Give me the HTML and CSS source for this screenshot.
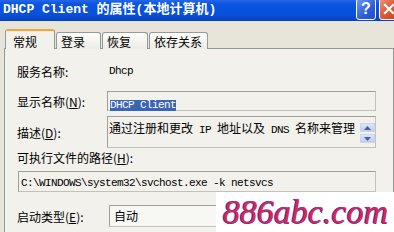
FILE: index.html
```
<!DOCTYPE html>
<html lang="zh-CN">
<head>
<meta charset="utf-8">
<title>DHCP Client 的属性</title>
<link rel="stylesheet" href="styles.css">
</head>
<body>
<div class="titlebar">
  <span class="title">DHCP Client 的属性(本地计算机)</span>
  <div class="tb-buttons">
    <span class="btn help">?</span>
    <span class="btn close"><svg width="12" height="12" viewBox="0 0 12 12"><path d="M2 2L10 10M10 2L2 10" stroke="#fff" stroke-width="2.2" stroke-linecap="square"/></svg></span>
  </div>
</div>
<div class="tabs">
  <div class="tab active t1">常规</div>
  <div class="tab t2">登录</div>
  <div class="tab t3">恢复</div>
  <div class="tab t4">依存关系</div>
</div>
<div class="panel">
  <div class="row r1"><span class="label">服务名称:</span><span class="mono name">Dhcp</span></div>
  <div class="row r2"><span class="label">显示名称(<u>N</u>):</span><div class="box display"><span class="mono sel">DHCP Client</span></div></div>
  <div class="row r3"><span class="label">描述(<u>D</u>):</span>
    <div class="box desc">
      <span class="desc-text">通过注册和更改<span class="lat"> IP </span>地址以及<span class="lat"> DNS </span>名称来管理</span>
      <div class="scroll">
        <span class="sbtn"><svg width="7" height="4" viewBox="0 0 7 4"><path d="M0 4L3.5 0L7 4Z" fill="#4d6185"/></svg></span>
        <span class="sbtn"><svg width="7" height="4" viewBox="0 0 7 4"><path d="M0 0L3.5 4L7 0Z" fill="#4d6185"/></svg></span>
      </div>
    </div>
  </div>
  <div class="row r4"><span class="label wide">可执行文件的路径(<u>H</u>):</span></div>
  <div class="box path"><span class="mono">C:\WINDOWS\system32\svchost.exe -k netsvcs</span></div>
  <div class="row r6"><span class="label">启动类型(<u>E</u>):</span><div class="box combo">自动</div></div>
</div>
<div class="watermark">886abc.com</div>
</body>
</html>
```
FILE: styles.css
```
* { box-sizing: border-box; }
body {
  margin: 0;
  width: 394px;
  height: 232px;
  overflow: hidden;
  position: relative;
  background: #e7e5da;
  font-family: "Noto Sans CJK SC", sans-serif;
  font-size: 12px;
  color: #000;
}
.titlebar {
  height: 21px;
  display: flex;
  justify-content: space-between;
  align-items: flex-start;
  background: linear-gradient(#2767e8, #0a55e2 18%, #0850da 70%, #0a41b8);
}
.title {
  color: #fff;
  font: bold 13px/20px "Liberation Mono", "Noto Sans CJK SC", monospace;
  padding-left: 3px;
  white-space: nowrap;
}
.tb-buttons {
  display: flex;
  gap: 3px;
  margin-top: -2px;
  margin-right: -5px;
}
.btn {
  width: 20px;
  height: 22px;
  border: 1px solid #fff;
  border-radius: 3px;
  display: flex;
  align-items: center;
  justify-content: center;
  color: #fff;
  font: bold 16px "Liberation Sans", sans-serif;
}
.help { background: linear-gradient(135deg, #6b9af6, #2d5ed8 60%, #1f4fc8); }
.close { background: linear-gradient(135deg, #f0917a, #e05a33 50%, #c8401e); }
.tabs {
  display: flex;
  align-items: flex-end;
  gap: 1px;
  height: 20px;
  margin: 8px 0 -1px 5px;
  position: relative;
  z-index: 1;
}
.tab {
  height: 17px;
  border: 1px solid #919b9c;
  border-bottom: none;
  border-radius: 3px 3px 0 0;
  background: linear-gradient(#fdfdfb, #ecebe5);
  padding: 1px 0 0 4px;
  line-height: 15px;
}
.t1 { width: 50px; }
.t2 { width: 45px; }
.t3 { width: 46px; }
.t4 { width: 59px; }
.tab.active {
  height: 20px;
  border-top: 2px solid #f0a73a;
  background: #f2f1eb;
  padding: 3px 0 0 7px;
}
.panel {
  margin-left: 4px;
  width: 390px;
  height: 184px;
  overflow: hidden;
  border: 1px solid #919b9c;
  border-bottom: none;
  background: #f2f1eb;
  padding: 15px 0 0 12px;
  display: flex;
  flex-direction: column;
}
.row { display: flex; align-items: center; flex: none; }
.label { width: 90px; flex: none; white-space: nowrap; }
.mono {
  font: 11px "Liberation Mono", monospace;
  letter-spacing: -0.6px;
  white-space: pre;
}
.r1 { height: 14px; }
.name { margin-left: 2px; }
.box {
  flex: none;
  border: 1px solid #c2c2ba;
  border-top-color: #9f9f97;
  border-left-color: #9f9f97;
}
.r2 { margin-top: 13px; }
.display {
  width: 269px;
  height: 20px;
  padding: 2px 0 0 2px;
}
.sel {
  display: inline-block;
  background: #3a64b4;
  color: #fff;
  line-height: 11px;
  height: 11px;
}
.r3 { margin-top: 5px; }
.desc {
  width: 269px;
  height: 32px;
  display: flex;
  justify-content: space-between;
}
.desc-text {
  line-height: 14px;
  padding: 4px 0 0 1px;
  white-space: nowrap;
}
.lat {
  font: 11px "Liberation Mono", monospace;
  letter-spacing: -0.6px;
  white-space: pre;
}
.scroll {
  display: flex;
  flex-direction: column;
  gap: 2px;
  padding-top: 6px;
}
.sbtn {
  width: 15px;
  height: 9px;
  background: linear-gradient(#dde6fa, #bccbf0);
  border: 1px solid #c9d4ef;
  display: flex;
  align-items: center;
  justify-content: center;
}
.r4 { margin-top: 3px; height: 13px; }
.path {
  margin: 7px 0 0 1px;
  width: 358px;
  height: 21px;
  padding: 2px 0 0 2px;
  display: flex;
  align-items: center;
}
.r6 { margin-top: 13px; }
.combo {
  margin-left: 2px;
  width: 280px;
  height: 22px;
  padding-left: 4px;
  line-height: 20px;
  background: #f7f7f4;
}
.watermark {
  position: absolute;
  left: 216px;
  top: 192px;
  width: 178px;
  height: 40px;
  overflow: hidden;
  background: #fff;
  padding: 3px 0 0 7px;
  font: italic 34px/34px "Liberation Serif", serif;
  color: #d8284c;
  text-shadow: -1px 0 0 #4a3ed0, 0 1px 0 #8a2f9a;
  white-space: nowrap;
}
```
